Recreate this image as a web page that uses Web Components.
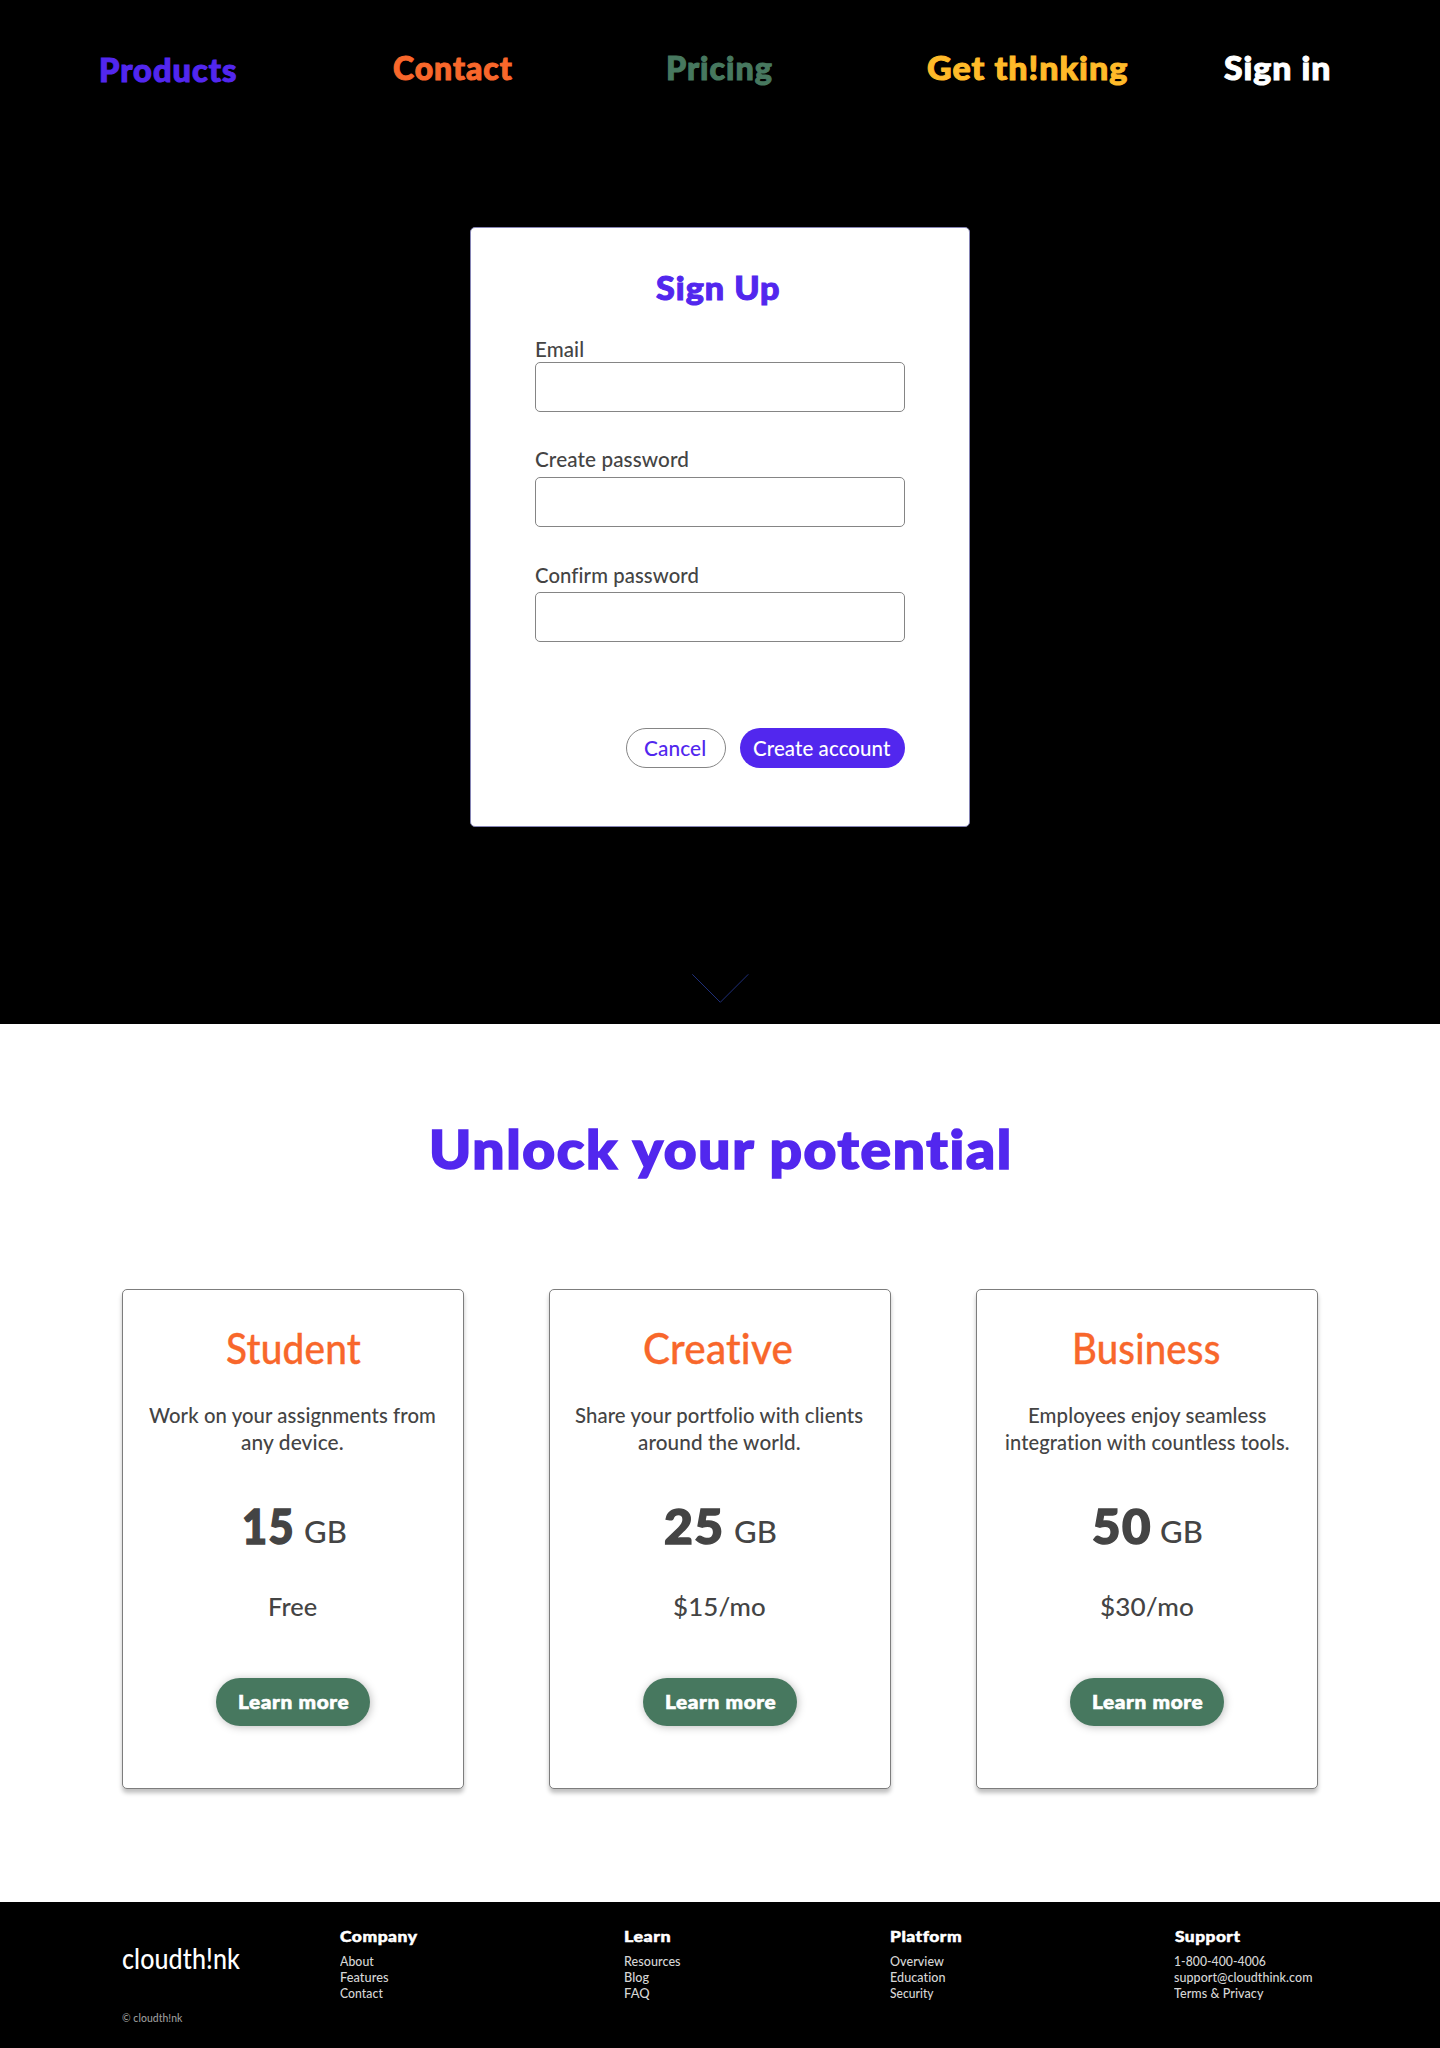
<!DOCTYPE html>
<html lang="en">
<head>
<meta charset="utf-8">
<title>cloudth!nk</title>
<style>
  html, body { margin: 0; }
  body { width: 1440px; height: 2048px; background: #fff; overflow: hidden; font-family: Lato, "Open Sans", sans-serif; color: #444; }
</style>
</head>
<body>
<cloud-page></cloud-page>
<script>
const ctx = document.createElement('canvas').getContext('2d');

function define(name, html, setup) {
  const tpl = document.createElement('template');
  tpl.innerHTML = html;
  customElements.define(name, class extends HTMLElement {
    constructor() {
      super();
      this.attachShadow({ mode: 'open' }).append(tpl.content.cloneNode(true));
    }
    connectedCallback() { if (setup) setup(this, this.shadowRoot); }
  });
}

/* One line of type. size/weight: the face; w: set width in px;
   lead: distance from the box above to the baseline; x: left indent. */
define('type-line', `
  <style>
    :host { display: block; white-space: nowrap; flex: none; box-sizing: border-box; }
    span { display: block; width: max-content; transform-origin: 0 100%; }
  </style>
  <span><slot></slot></span>`, (el, root) => {
  const n = (k, d) => el.hasAttribute(k) ? parseFloat(el.getAttribute(k)) : d;
  const text = el.textContent, size = n('size', 21), weight = n('weight', 500), span = root.querySelector('span');
  const heavy = weight > 800, stroke = heavy ? size * 0.032 : size > 40 ? size * 0.008 : 0;
  const track = heavy ? size * 0.03 : size * 0.005;
  ctx.font = `${weight} ${size}px Lato, "Open Sans", sans-serif`;
  ctx.letterSpacing = '0.01px';
  const m = ctx.measureText(text);
  const ink = m.actualBoundingBoxRight + m.actualBoundingBoxLeft + stroke + track * (text.length - 1);
  const w = n('w', ink), k = w / ink * (heavy ? 1.006 : 1.003);
  const line = Math.round(m.fontBoundingBoxAscent) - Math.round(m.fontBoundingBoxDescent);
  span.style.cssText = `font-size:${size}px;font-weight:${weight};line-height:${line}px;height:${line}px;` +
    `letter-spacing:${track.toFixed(3)}px;margin-left:${((m.actualBoundingBoxLeft + stroke / 2) * k).toFixed(2)}px;` +
    `-webkit-text-stroke:${stroke.toFixed(2)}px currentColor;` +
    `transform:translateY(${heavy && size > 30 ? 1 : 0}px) scaleX(${k.toFixed(4)})`;
  el.style.width = w + 'px';
  el.style.paddingTop = (n('lead', line) - line) + 'px';
  if (el.hasAttribute('x')) el.style.marginLeft = n('x', 0) + 'px';
});

define('nav-bar', `
  <style>
    :host { display: block; }
    nav { display: flex; align-items: flex-start; padding-left: 101px; }
  </style>
  <nav>
    <type-line size="32" weight="900" w="135.5" lead="80.5" style="color:#5227ee">Products</type-line>
    <type-line size="32" weight="900" w="118" lead="79" x="156.5" style="color:#f8672b">Contact</type-line>
    <type-line size="32" weight="900" w="104.3" lead="79" x="156" style="color:#47785f">Pricing</type-line>
    <type-line size="32" weight="900" w="199.2" lead="79" x="156.5" style="color:#ffba29">Get th!nking</type-line>
    <type-line size="32" weight="900" w="105.6" lead="79" x="96.5" style="color:#fff">Sign in</type-line>
  </nav>`);

define('form-field', `
  <style>
    :host { display: block; }
    input { display: block; box-sizing: border-box; width: 370px; height: 50px; margin: 0; padding: 0 12px;
      border: 1px solid #858585; border-radius: 5px; background: #fff; font: inherit; outline: none; }
  </style>
  <slot></slot><input>`, (el, root) => {
  root.querySelector('input').style.marginTop = el.getAttribute('drop') + 'px';
});

define('pill-button', `
  <style>
    :host { display: block; }
    button { display: flex; justify-content: center; align-items: flex-start; box-sizing: border-box; margin: 0; padding: 0;
      width: var(--w); height: var(--h); border: var(--edge, 0); border-radius: 30px; background: var(--fill, #fff);
      color: inherit; font: inherit; box-shadow: var(--shade, none); }
  </style>
  <button><slot></slot></button>`);

define('signup-card', `
  <style>
    :host { display: block; box-sizing: border-box; width: 500px; height: 600px; background: #fff; border: 1px solid #8584b4; border-radius: 5px; }
    .title { display: flex; justify-content: center; margin-left: -4.5px; color: #5227ee; }
    .fields { padding-left: 64px; }
    .actions { display: flex; gap: 14px; padding: 86px 0 0 155px; }
    .cancel { --w: 100px; --h: 40px; --edge: 1px solid #858585; color: #5227ee; }
    .create { --w: 165px; --h: 40px; --fill: #5227ee; color: #fff; }
  </style>
  <div class="title"><type-line size="32" weight="900" w="123.7" lead="71">Sign Up</type-line></div>
  <div class="fields">
    <form-field drop="5"><type-line w="47" lead="58" x="1">Email</type-line></form-field>
    <form-field drop="10"><type-line w="152.8" lead="55" x=".3">Create password</type-line></form-field>
    <form-field drop="9"><type-line w="162.8" lead="56" x=".3">Confirm password</type-line></form-field>
  </div>
  <div class="actions">
    <pill-button class="cancel"><type-line w="61" lead="27" x="-2.5">Cancel</type-line></pill-button>
    <pill-button class="create"><type-line w="137.5" lead="28" x="-1">Create account</type-line></pill-button>
  </div>`);

define('hero-panel', `
  <style>
    :host { display: flex; flex-direction: column; align-items: center; box-sizing: border-box; height: 1024px; background: #000; }
    nav-bar { width: 1440px; height: 227px; }
    svg { display: block; margin-top: 145px; }
  </style>
  <nav-bar></nav-bar>
  <signup-card></signup-card>
  <svg width="60" height="34" viewBox="0 0 60 34"><path d="M2.3 2.3 30.3 30.3 58.3 2.3" fill="none" stroke="#1f2f7a" stroke-width="1"/></svg>`);

define('plan-card', `
  <style>
    :host { display: flex; flex-direction: column; align-items: center; box-sizing: border-box; width: 342px; height: 500px;
      background: #fff; border: 1px solid #7d7d7d; border-radius: 5px; box-shadow: 0 4px 4px rgba(0,0,0,.25); }
    .name { color: #f8672b; }
    .desc { display: flex; flex-direction: column; align-items: center; }
    .size { display: flex; align-items: flex-end; }
    pill-button { --w: 154px; --h: 48px; --fill: #47785f; --shade: 1px 1px 8px rgba(0,0,0,.26); color: #fff; margin-top: 62px; }
  </style>
  <div class="name"><slot name="name"></slot></div>
  <div class="desc"><slot name="desc"></slot></div>
  <div class="size"><slot name="size"></slot></div>
  <slot name="price"></slot>
  <pill-button><type-line size="19.5" weight="900" w="109.2" lead="31" x="1">Learn more</type-line></pill-button>`);

define('footer-column', `
  <style>
    :host { display: block; color: #d6d6d6; }
    ::slotted([slot=title]) { color: #fff; }
  </style>
  <slot name="title"></slot><slot></slot>`);

define('site-footer', `
  <style>
    :host { display: flex; align-items: flex-start; box-sizing: border-box; height: 146px; padding-left: 122.4px; background: #000; }
    .brand { width: 217.8px; color: #fff; }
    .legal { color: #9b9b9b; }
    footer-column { width: 0; }
  </style>
  <div class="brand">
    <type-line size="28" weight="500" w="117.3" lead="67">cloudth!nk</type-line>
    <type-line class="legal" size="11" weight="500" w="60.7" lead="53">© cloudth!nk</type-line>
  </div>
  <footer-column>
    <type-line slot="title" size="15.5" weight="900" w="78" lead="40">Company</type-line>
    <type-line size="12.5" w="34.2" lead="24">About</type-line>
    <type-line size="12.5" w="47" lead="16" x=".6">Features</type-line>
    <type-line size="12.5" w="43.2" lead="16">Contact</type-line>
  </footer-column>
  <footer-column style="margin-left:284.6px">
    <type-line slot="title" size="15.5" weight="900" w="45" lead="40">Learn</type-line>
    <type-line size="12.5" w="55" lead="24">Resources</type-line>
    <type-line size="12.5" w="24.5" lead="16">Blog</type-line>
    <type-line size="12.5" w="24.5" lead="16">FAQ</type-line>
  </footer-column>
  <footer-column style="margin-left:265.7px">
    <type-line slot="title" size="15.5" weight="900" w="70.6" lead="40">Platform</type-line>
    <type-line size="12.5" w="54" lead="24">Overview</type-line>
    <type-line size="12.5" w="54.4" lead="16" x=".6">Education</type-line>
    <type-line size="12.5" w="44" lead="16">Security</type-line>
  </footer-column>
  <footer-column style="margin-left:284px">
    <type-line slot="title" size="15.5" weight="900" w="65.3" lead="40">Support</type-line>
    <type-line size="12.5" w="91.5" lead="24">1-800-400-4006</type-line>
    <type-line size="12.5" w="137.9" lead="16">support@cloudthink.com</type-line>
    <type-line size="12.5" w="89.8" lead="16">Terms &amp; Privacy</type-line>
  </footer-column>`);

define('plans-section', `
  <style>
    :host { display: flex; flex-direction: column; align-items: center; box-sizing: border-box; height: 878px; background: #fff; }
    .head { color: #5227ee; margin-left: 1px; }
    .cards { display: flex; gap: 85px; margin-top: 121px; }
  </style>
  <type-line class="head" size="53" weight="900" w="577.6" lead="144">Unlock your potential</type-line>
  <div class="cards">
    <plan-card>
      <type-line slot="name" size="42" w="133.7" lead="74" x="1.5">Student</type-line>
      <type-line slot="desc" w="286.8" lead="59" x="-1">Work on your assignments from</type-line>
      <type-line slot="desc" w="102" lead="27" x="-2">any device.</type-line>
      <type-line slot="size" size="47" weight="900" w="48.7" lead="93" x="2">15</type-line>
      <type-line slot="size" size="31" w="40.7" x="13.3">GB</type-line>
      <type-line slot="price" size="25.5" w="46.7" lead="73">Free</type-line>
    </plan-card>
    <plan-card>
      <type-line slot="name" size="42" w="147.7" lead="74" x="-4">Creative</type-line>
      <type-line slot="desc" w="288.8" lead="59" x="-1">Share your portfolio with clients</type-line>
      <type-line slot="desc" w="161.7" lead="27" x="-2">around the world.</type-line>
      <type-line slot="size" size="47" weight="900" w="57" lead="93">25</type-line>
      <type-line slot="size" size="31" w="40.7" x="13.3">GB</type-line>
      <type-line slot="price" size="25.5" w="91" lead="73" x="-2">$15/mo</type-line>
    </plan-card>
    <plan-card>
      <type-line slot="name" size="42" w="144.4" lead="74">Business</type-line>
      <type-line slot="desc" w="237.3" lead="59" x="1.5">Employees enjoy seamless</type-line>
      <type-line slot="desc" w="282.5" lead="27" x="1">integration with countless tools.</type-line>
      <type-line slot="size" size="47" weight="900" w="58.4" lead="93">50</type-line>
      <type-line slot="size" size="31" w="40.7" x="11">GB</type-line>
      <type-line slot="price" size="25.5" w="92" lead="73">$30/mo</type-line>
    </plan-card>
  </div>`);

define('cloud-page', `
  <style>:host { display: block; width: 1440px; height: 2048px; }</style>
  <hero-panel></hero-panel>
  <plans-section></plans-section>
  <site-footer></site-footer>`);
</script>
</body>
</html>
